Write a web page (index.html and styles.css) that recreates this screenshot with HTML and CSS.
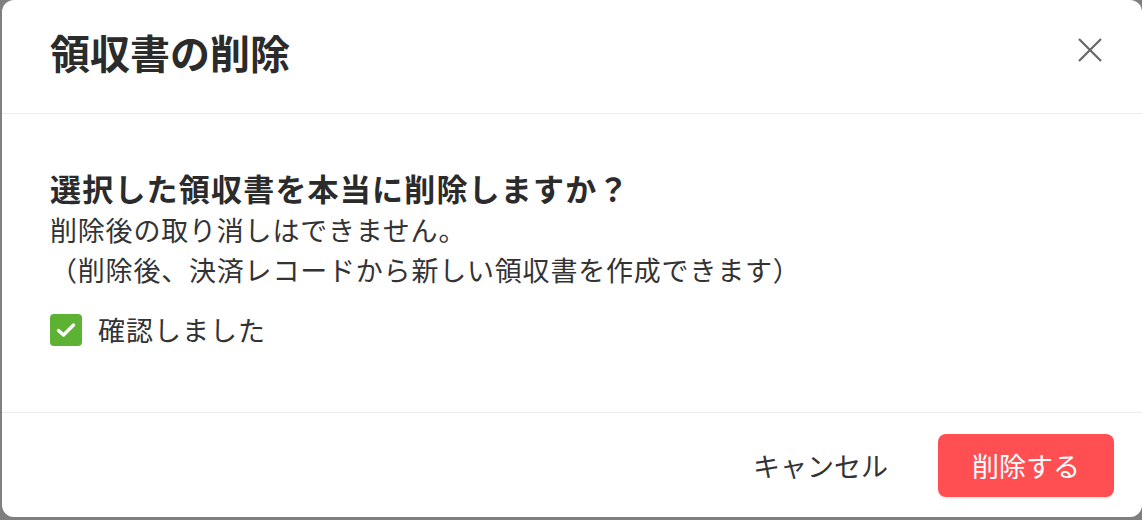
FILE: index.html
```html
<!DOCTYPE html>
<html lang="ja">
<head>
<meta charset="utf-8">
<link rel="stylesheet" href="styles.css">
</head>
<body>
<div class="backdrop">
  <div class="dialog">
    <div class="dialog-header">
      <h1 class="dialog-title">領収書の削除</h1>
      <button class="close-btn" aria-label="閉じる">
        <svg width="24" height="24" viewBox="0 0 24 24"><path d="M1 1 L23 23 M23 1 L1 23" stroke="#666" stroke-width="2.2" fill="none"/></svg>
      </button>
    </div>
    <div class="dialog-body">
      <p class="question">選択した領収書を本当に削除しますか？</p>
      <p class="note">削除後の取り消しはできません。</p>
      <p class="note">（削除後、決済レコードから新しい領収書を作成できます）</p>
      <label class="confirm">
        <span class="checkbox">
          <svg width="20" height="16" viewBox="0 0 20 16"><path d="M2.5 8.5 L7.5 13 L17.5 3" stroke="#fff" stroke-width="3.4" fill="none" stroke-linecap="round" stroke-linejoin="round"/></svg>
        </span>
        <span class="confirm-text">確認しました</span>
      </label>
    </div>
    <div class="dialog-footer">
      <button class="btn-cancel">キャンセル</button>
      <button class="btn-delete">削除する</button>
    </div>
  </div>
</div>
</body>
</html>
```

FILE: styles.css
```css
* { box-sizing: border-box; }
html, body {
  margin: 0;
  padding: 0;
  width: 1142px;
  height: 520px;
  overflow: hidden;
  background: #7f7f7f;
  font-family: "Noto Sans CJK JP", "Noto Sans", sans-serif;
  color: #333;
}
.backdrop {
  width: 1142px;
  height: 520px;
  padding-left: 2px;
}
.dialog {
  width: 1140px;
  height: 517px;
  background: #fff;
  border-radius: 12px;
  display: flex;
  flex-direction: column;
}
.dialog-header {
  height: 114px;
  display: flex;
  justify-content: space-between;
  align-items: flex-start;
  padding: 0 40px 0 48px;
  border-bottom: 1px solid #ececec;
}
.dialog-title {
  margin: 0;
  padding-top: 24px;
  font-size: 40px;
  line-height: 56px;
  font-weight: 700;
  color: #2b2b2b;
}
.close-btn {
  margin-top: 38px;
  width: 24px;
  height: 24px;
  padding: 0;
  border: none;
  background: none;
  display: flex;
}
.dialog-body {
  flex: 1;
  padding: 52px 48px 0 48px;
}
.question {
  margin: 0;
  font-size: 31px;
  line-height: 44px;
  font-weight: 700;
  letter-spacing: 1.2px;
  color: #2b2b2b;
}
.note {
  margin: 0;
  font-size: 27px;
  line-height: 40px;
  letter-spacing: 0.8px;
  color: #333;
}
.confirm {
  margin-top: 24px;
  display: flex;
  align-items: center;
  gap: 16px;
}
.checkbox {
  width: 32px;
  height: 32px;
  border-radius: 4px;
  background: #5db234;
  display: flex;
  align-items: center;
  justify-content: center;
}
.confirm-text {
  font-size: 27px;
  line-height: 32px;
  letter-spacing: 1px;
  color: #333;
}
.dialog-footer {
  border-top: 1px solid #ececec;
  padding: 21px 28px 20px 0;
  display: flex;
  justify-content: flex-end;
  align-items: center;
  gap: 50px;
}
.btn-cancel {
  border: none;
  background: none;
  padding: 0;
  font-family: inherit;
  font-size: 27px;
  color: #333;
}
.btn-delete {
  width: 176px;
  height: 63px;
  border: none;
  border-radius: 8px;
  background: #ff4f52;
  color: #fff;
  font-family: inherit;
  font-size: 27px;
  box-shadow: 0 2px 2px rgba(0, 0, 0, 0.08);
}
```
